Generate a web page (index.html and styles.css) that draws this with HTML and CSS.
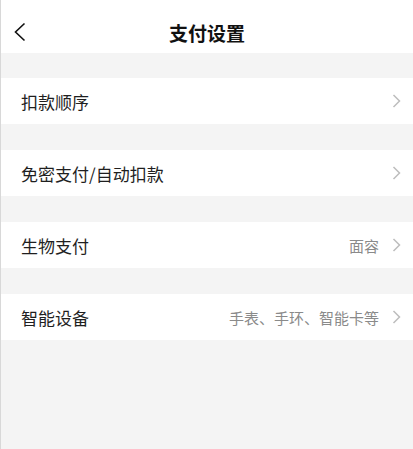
FILE: index.html
```html
<!DOCTYPE html>
<html>

<head>
    <title>支付设置</title>
    <meta charset="utf-8">
    <meta name="viewport" content="width=device-width, initial-scale=1.0">
    <link rel="stylesheet" href="styles.css">
</head>

<body>
    <header class="topbar">
        <svg class="back" width="12" height="20" viewBox="0 0 12 20">
            <polyline points="10.5,1.5 1.5,10 10.5,18.5" fill="none" stroke="#111" stroke-width="1.6" />
        </svg>
        <h1>支付设置</h1>
    </header>

    <section class="liste">
        <div class="rad">
            <span class="navn">扣款顺序</span>
            <span class="info"></span>
            <svg class="pil" width="9" height="14" viewBox="0 0 9 14">
                <polyline points="1.5,1 7.5,7 1.5,13" fill="none" stroke="#bdbdbd" stroke-width="1.5" />
            </svg>
        </div>
        <div class="rad">
            <span class="navn">免密支付/自动扣款</span>
            <span class="info"></span>
            <svg class="pil" width="9" height="14" viewBox="0 0 9 14">
                <polyline points="1.5,1 7.5,7 1.5,13" fill="none" stroke="#bdbdbd" stroke-width="1.5" />
            </svg>
        </div>
        <div class="rad">
            <span class="navn">生物支付</span>
            <span class="info">面容</span>
            <svg class="pil" width="9" height="14" viewBox="0 0 9 14">
                <polyline points="1.5,1 7.5,7 1.5,13" fill="none" stroke="#bdbdbd" stroke-width="1.5" />
            </svg>
        </div>
        <div class="rad">
            <span class="navn">智能设备</span>
            <span class="info">手表、手环、智能卡等</span>
            <svg class="pil" width="9" height="14" viewBox="0 0 9 14">
                <polyline points="1.5,1 7.5,7 1.5,13" fill="none" stroke="#bdbdbd" stroke-width="1.5" />
            </svg>
        </div>
    </section>
</body>

</html>
```

FILE: styles.css
```css
html,
body {
    height: 100%;
}

body {
    margin: 0;
    background-color: #f4f4f4;
    border-left: 1px solid #d8d8d8;
    box-sizing: border-box;
    font-family: "Noto Sans CJK SC", "Noto Sans", sans-serif;
    color: #1f1f1f;
}

.topbar {
    position: relative;
    height: 53px;
    box-sizing: border-box;
    padding-top: 11px;
    background-color: white;
    display: flex;
    align-items: center;
    justify-content: center;
}

.topbar h1 {
    margin: 0;
    font-size: 19px;
    font-weight: bold;
    color: #111;
}

.back {
    position: absolute;
    left: 13px;
    top: 22px;
}

.liste {
    display: flex;
    flex-direction: column;
    gap: 26px;
    padding-top: 25px;
}

.rad {
    height: 46px;
    background-color: white;
    display: flex;
    align-items: center;
    padding: 0 12px 0 20px;
}

.navn {
    font-size: 17px;
    flex: 1;
}

.info {
    font-size: 15px;
    color: #8a8a8a;
    margin-right: 13px;
}

.pil {
    display: block;
}
```
